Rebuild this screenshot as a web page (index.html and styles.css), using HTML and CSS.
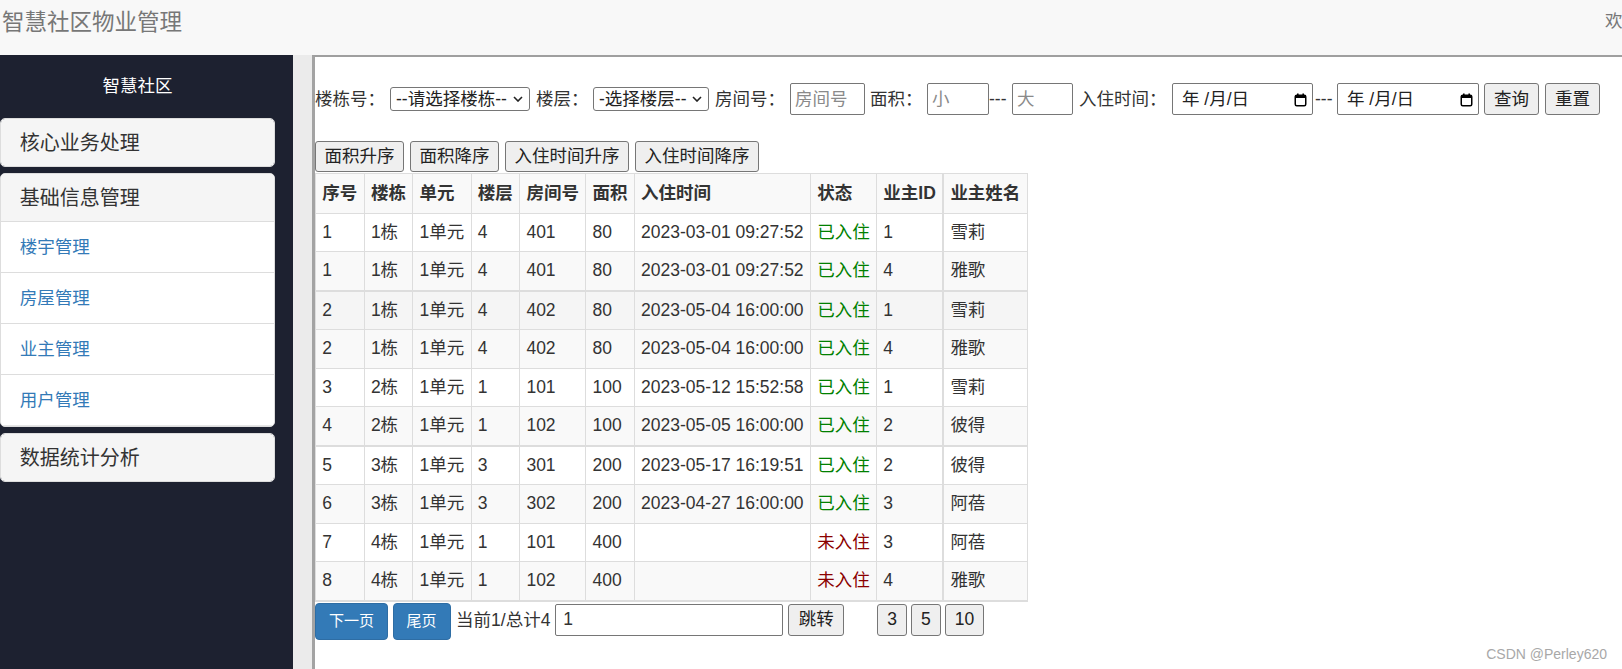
FILE: index.html
```html
<!DOCTYPE html>
<html lang="zh-CN">
<head>
<meta charset="utf-8">
<title>智慧社区物业管理</title>
<link rel="stylesheet" href="styles.css">
</head>
<body>
<header class="topbar">
  <div class="brand">智慧社区物业管理</div>
  <div class="welcome">欢迎您，管理员</div>
</header>
<div class="layout">
  <aside class="sidebar">
    <div class="side-inner">
      <div class="side-title">智慧社区</div>
      <div class="panel"><div class="panel-heading">核心业务处理</div></div>
      <div class="panel">
        <div class="panel-heading open">基础信息管理</div>
        <ul class="list-group">
          <li><a href="#">楼宇管理</a></li>
          <li><a href="#">房屋管理</a></li>
          <li><a href="#">业主管理</a></li>
          <li><a href="#">用户管理</a></li>
        </ul>
      </div>
      <div class="panel"><div class="panel-heading">数据统计分析</div></div>
    </div>
  </aside>
  <div class="gutter"></div>
  <main class="content">
    <form class="filters">
      <span class="lbl m5">楼栋号：</span>
      <div class="select-wrap w140 m6">
        <select class="sel"><option>--请选择楼栋--</option></select>
        <svg class="chev" width="10" height="6" viewBox="0 0 10 6"><polyline points="1,1 5,5 9,1" fill="none" stroke="#222" stroke-width="1.6"/></svg>
      </div>
      <span class="lbl m45">楼层：</span>
      <div class="select-wrap w116 m6">
        <select class="sel"><option>-选择楼层--</option></select>
        <svg class="chev" width="10" height="6" viewBox="0 0 10 6"><polyline points="1,1 5,5 9,1" fill="none" stroke="#222" stroke-width="1.6"/></svg>
      </div>
      <span class="lbl m5">房间号：</span>
      <input class="inp w75 m5" placeholder="房间号">
      <span class="lbl m45">面积：</span>
      <input class="inp w62" placeholder="小">
      <span class="dash m55">---</span>
      <input class="inp w61 m6" placeholder="大">
      <span class="lbl m55">入住时间：</span>
      <div class="date w141">
        <span>年 /月/日</span>
        <svg width="13" height="14" viewBox="0 0 13 14"><rect x="1.25" y="2.25" width="10.5" height="10.5" rx="1.5" fill="none" stroke="#000" stroke-width="1.5"/><rect x="1" y="2" width="11" height="3" fill="#000"/><rect x="3" y="0.5" width="1.6" height="2" fill="#000"/><rect x="8.4" y="0.5" width="1.6" height="2" fill="#000"/></svg>
      </div>
      <span class="dash dash2 m45">---</span>
      <div class="date w142 m5">
        <span>年 /月/日</span>
        <svg width="13" height="14" viewBox="0 0 13 14"><rect x="1.25" y="2.25" width="10.5" height="10.5" rx="1.5" fill="none" stroke="#000" stroke-width="1.5"/><rect x="1" y="2" width="11" height="3" fill="#000"/><rect x="3" y="0.5" width="1.6" height="2" fill="#000"/><rect x="8.4" y="0.5" width="1.6" height="2" fill="#000"/></svg>
      </div>
      <button type="button" class="btn m6">查询</button>
      <button type="button" class="btn">重置</button>
    </form>

    <div class="sorts">
      <button type="button" class="btn sort">面积升序</button>
      <button type="button" class="btn sort">面积降序</button>
      <button type="button" class="btn sort">入住时间升序</button>
      <button type="button" class="btn sort">入住时间降序</button>
    </div>

    <table class="grid">
      <tbody>
        <tr class="alt head">
          <th>序号</th><th>楼栋</th><th>单元</th><th>楼层</th><th>房间号</th><th>面积</th><th>入住时间</th><th>状态</th><th>业主ID</th><th class="owner">业主姓名</th>
        </tr>
        <tr>
          <td>1</td><td>1栋</td><td>1单元</td><td>4</td><td>401</td><td>80</td><td>2023-03-01 09:27:52</td><td class="in">已入住</td><td>1</td><td class="owner">雪莉</td>
        </tr>
        <tr class="alt">
          <td>1</td><td>1栋</td><td>1单元</td><td>4</td><td>401</td><td>80</td><td>2023-03-01 09:27:52</td><td class="in">已入住</td><td>4</td><td class="owner">雅歌</td>
        </tr>
      </tbody>
      <tbody>
        <tr class="hover">
          <td>2</td><td>1栋</td><td>1单元</td><td>4</td><td>402</td><td>80</td><td>2023-05-04 16:00:00</td><td class="in">已入住</td><td>1</td><td class="owner">雪莉</td>
        </tr>
        <tr class="alt">
          <td>2</td><td>1栋</td><td>1单元</td><td>4</td><td>402</td><td>80</td><td>2023-05-04 16:00:00</td><td class="in">已入住</td><td>4</td><td class="owner">雅歌</td>
        </tr>
        <tr>
          <td>3</td><td>2栋</td><td>1单元</td><td>1</td><td>101</td><td>100</td><td>2023-05-12 15:52:58</td><td class="in">已入住</td><td>1</td><td class="owner">雪莉</td>
        </tr>
        <tr class="alt">
          <td>4</td><td>2栋</td><td>1单元</td><td>1</td><td>102</td><td>100</td><td>2023-05-05 16:00:00</td><td class="in">已入住</td><td>2</td><td class="owner">彼得</td>
        </tr>
      </tbody>
      <tbody>
        <tr>
          <td>5</td><td>3栋</td><td>1单元</td><td>3</td><td>301</td><td>200</td><td>2023-05-17 16:19:51</td><td class="in">已入住</td><td>2</td><td class="owner">彼得</td>
        </tr>
        <tr class="alt">
          <td>6</td><td>3栋</td><td>1单元</td><td>3</td><td>302</td><td>200</td><td>2023-04-27 16:00:00</td><td class="in">已入住</td><td>3</td><td class="owner">阿蓓</td>
        </tr>
        <tr>
          <td>7</td><td>4栋</td><td>1单元</td><td>1</td><td>101</td><td>400</td><td></td><td class="out">未入住</td><td>3</td><td class="owner">阿蓓</td>
        </tr>
        <tr class="alt">
          <td>8</td><td>4栋</td><td>1单元</td><td>1</td><td>102</td><td>400</td><td></td><td class="out">未入住</td><td>4</td><td class="owner">雅歌</td>
        </tr>
      </tbody>
    </table>

    <div class="pager">
      <button type="button" class="btn-primary">下一页</button>
      <button type="button" class="btn-primary">尾页</button>
      <span class="page-info">当前1/总计4</span>
      <input class="inp page-input" value="1">
      <button type="button" class="btn pbtn">跳转</button>
      <button type="button" class="btn pbtn size first">3</button>
      <button type="button" class="btn pbtn size">5</button>
      <button type="button" class="btn pbtn size">10</button>
    </div>
  </main>
</div>
<div class="watermark">CSDN @Perley620</div>
</body>
</html>
```

FILE: styles.css
```css
* { box-sizing: border-box; }
html, body { margin: 0; padding: 0; }
body {
  font-family: "Liberation Sans", "Noto Sans CJK SC", sans-serif;
  font-size: 17.5px;
  line-height: 25px;
  color: #333;
  width: 1622px;
  height: 669px;
  overflow: hidden;
  position: relative;
  background: #fff;
}

/* top bar */
.topbar {
  height: 55px;
  background: #f8f8f8;
  display: flex;
  align-items: flex-start;
  justify-content: space-between;
  overflow: hidden;
}
.brand {
  font-size: 22.5px;
  line-height: 45px;
  color: #777;
  padding-left: 2px;
  white-space: nowrap;
}
.welcome {
  width: 17px;
  overflow: hidden;
  white-space: nowrap;
  color: #777;
  line-height: 43px;
}

/* layout */
.layout { display: flex; height: 614px; }
.sidebar { width: 293px; flex-shrink: 0; background: #1d2130; }
.side-inner { width: 275px; }
.side-title {
  color: #fff;
  text-align: center;
  line-height: 25px;
  padding-top: 19px;
  margin-bottom: 19px;
}
.panel {
  background: #fff;
  border: 1px solid #ddd;
  border-radius: 5px;
  overflow: hidden;
  margin-bottom: 6px;
}
.panel-heading {
  background: #f5f5f5;
  padding: 12.5px 18.75px;
  font-size: 20px;
  line-height: 22px;
  color: #333;
}
.panel-heading.open { border-bottom: 1px solid #ddd; }
.list-group { list-style: none; margin: 0; padding: 0; }
.list-group li {
  padding: 12.5px 18.75px;
  line-height: 25px;
  border-bottom: 1px solid #ddd;
}
.list-group li:last-child { border-bottom-color: #e6e6e6; }
.list-group a { color: #337ab7; text-decoration: none; }

.gutter { width: 19px; flex-shrink: 0; background: #ebebeb; }

.content {
  flex: 1;
  border-top: 2px solid #9f9f9f;
  border-left: 3px solid #a3a3a3;
  background: #fff;
  position: relative;
}

/* filter row */
.filters {
  margin: 26px 0 0 0;
  height: 32px;
  display: flex;
  align-items: center;
}
.lbl, .dash { white-space: nowrap; line-height: 25px; }
.m5 { margin-right: 5px; }
.m45 { margin-right: 4.5px; }
.m55 { margin-right: 5.5px; }
.m6 { margin-right: 6px; }
.dash2 { margin-left: 2px; }

.select-wrap { position: relative; height: 24px; }
.w140 { width: 140px; }
.w116 { width: 116px; }
.sel {
  appearance: none;
  -webkit-appearance: none;
  width: 100%;
  height: 24px;
  border: 1px solid #767676;
  border-radius: 3px;
  background: #fff;
  font: inherit;
  font-size: 17.5px;
  line-height: 22px;
  color: #222;
  padding: 0 0 0 5px;
}
.chev { position: absolute; right: 7px; top: 9px; }

.inp {
  height: 32px;
  border: 1px solid #767676;
  border-radius: 2px;
  background: #fff;
  font: inherit;
  font-size: 17.5px;
  color: #333;
  padding: 0 0 0 4px;
}
.inp::placeholder { color: #8a8a8a; }
.w75 { width: 75px; }
.w62 { width: 62px; }
.w61 { width: 61px; }

.date {
  height: 32px;
  border: 1px solid #767676;
  border-radius: 2px;
  display: flex;
  align-items: center;
  justify-content: space-between;
  padding: 0 5px 0 9px;
  color: #222;
  white-space: pre;
}
.date svg { margin-top: 1px; }
.w141 { width: 141px; }
.w142 { width: 142px; }

.btn {
  height: 32px;
  background: #efefef;
  border: 1px solid #767676;
  border-radius: 3px;
  font: inherit;
  font-size: 17.5px;
  line-height: 25px;
  color: #222;
  padding: 0 9px;
  cursor: pointer;
}

/* sort row */
.sorts { margin-top: 26px; display: flex; gap: 6px; }
.btn.sort { height: 31px; padding: 0 8.5px; }

/* table */
.grid {
  margin-top: 1px;
  border-collapse: collapse;
  border-bottom: 2px solid #ddd;
}
.grid th, .grid td {
  border: 1px solid #ddd;
  padding: 6.25px 6.3px;
  line-height: 25px;
  text-align: left;
  vertical-align: top;
  white-space: nowrap;
}
.grid th { font-weight: bold; color: #333; }
.grid tbody + tbody { border-top: 2px solid #ddd; }
.grid .owner { border-left: 2px solid #ddd; }
.grid tr { background: #fff; }
.grid tr.alt { background: #f9f9f9; }
.grid tr.hover { background: #f5f5f5; }
.grid tr.head th { padding-top: 6.75px; padding-bottom: 6.75px; }
.in { color: #008000; }
.out { color: #8b0000; }

/* pager */
.pager {
  margin-top: 1px;
  display: flex;
  align-items: flex-start;
}
.btn-primary {
  height: 37px;
  background: #337ab7;
  border: 1px solid #2e6da4;
  border-radius: 4px;
  color: #fff;
  font: inherit;
  font-size: 15px;
  line-height: 22px;
  padding: 0 13px;
  margin-right: 4.5px;
}
.page-info {
  margin: 1px 0 0 1px;
  line-height: 32px;
  white-space: nowrap;
}
.page-input {
  width: 228px;
  margin: 1px 0 0 5px;
  padding-left: 7px;
}
.pbtn { margin: 1px 0 0 5px; padding: 0 9.5px; }
.pbtn.size { margin-left: 4px; padding: 0 9px; }
.pbtn.size.first { margin-left: 33px; }

.watermark {
  position: absolute;
  right: 15px;
  bottom: 7px;
  font-family: "Liberation Sans", sans-serif;
  font-size: 14px;
  line-height: 16px;
  color: #a8a8a8;
}
```
